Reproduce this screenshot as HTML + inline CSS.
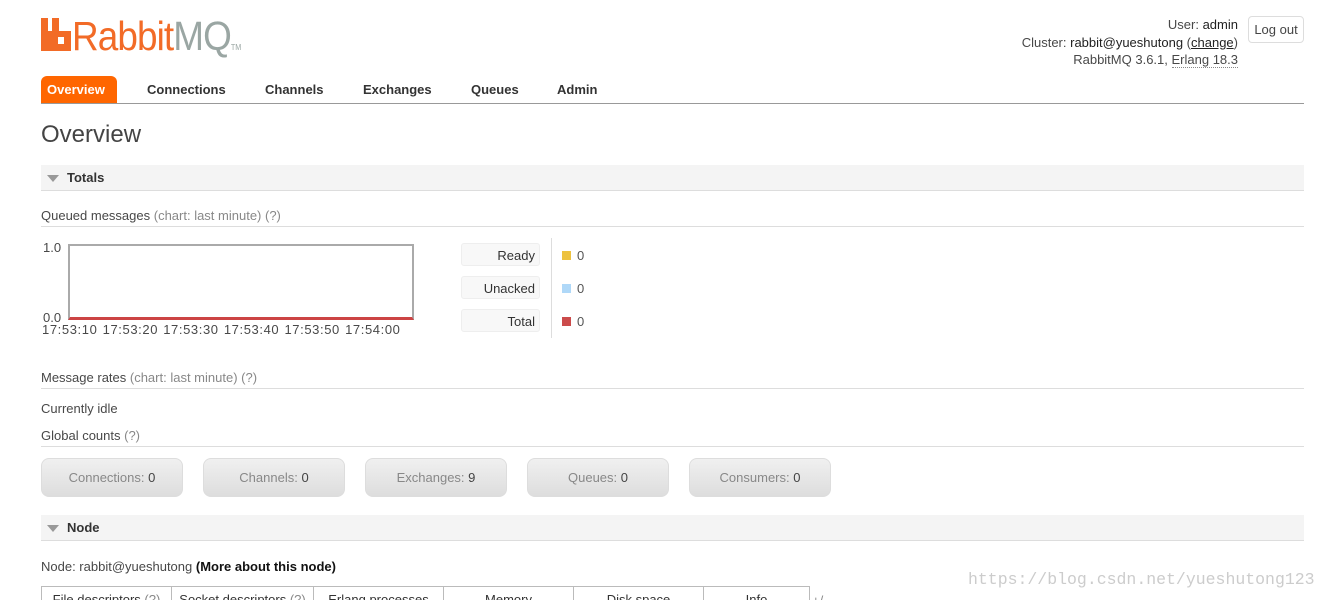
<!DOCTYPE html>
<html><head><meta charset="utf-8"><style>
html,body{margin:0;height:600px;overflow:hidden}
body{background:#fff;font-family:"Liberation Sans",sans-serif;font-size:13px;color:#484848;width:1329px;position:relative}
.a{position:absolute}
.logo{left:72px;top:12px;font-size:41px;color:#f26b27;letter-spacing:-1px;line-height:48px;transform:scaleX(0.9);transform-origin:left top}
.logo span{color:#9aa6a3}
.nav{left:41px;top:76px;width:1263px;height:27px;border-bottom:1px solid #999}
.nav div{position:absolute;top:0;height:27px;line-height:27px;font-weight:bold;color:#333;font-size:13px}
.nav .on{background:#f60;color:#fff;border-radius:6px 6px 0 0;padding:0 6px;left:0;width:64px}
.sec{left:41px;width:1263px;height:25px;background:#f4f4f4;border-bottom:1px solid #ddd;line-height:25px;font-weight:bold;color:#333}
.sec:before{content:"";display:inline-block;margin:0 8px 0 6px;border:6px solid transparent;border-top:7px solid #999;border-bottom:0;vertical-align:middle}
.h{left:41px;width:1263px;border-bottom:1px solid #ddd;padding-bottom:3px}
.g{color:#888}
.btn{top:458px;width:140px;height:37px;background:linear-gradient(#f0f0f0,#ddd);border:1px solid #ddd;border-radius:8px;text-align:center;line-height:38px;color:#888;font-size:13px}
.btn b{font-weight:normal;color:#444}
.lb{left:461px;width:79px;height:23px;background:#f8f8f8;border:1px solid #eee;border-radius:3px;text-align:right;line-height:23px;box-sizing:border-box;padding-right:4px;color:#333}
.sq{left:562px;width:9px;height:9px}
.v{left:577px;color:#555}
th{font-weight:normal;border:1px solid #bbb;padding:5px 6px 10px;color:#333}
</style></head><body>
<svg class="a" style="left:41px;top:18px" width="30" height="33" viewBox="0 0 30 33"><path d="M0 0H7V13H11V0H18V13H30V33H0Z M17 19V26H23V19Z" fill="#f26b27" fill-rule="evenodd"/></svg>
<div class="a logo">Rabbit<span>MQ</span><span style="font-size:8px;letter-spacing:0">TM</span></div>
<div class="a" style="right:91px;top:16px;text-align:right;line-height:17.5px;font-size:13px">User: <span style="color:#222">admin</span><br>Cluster: <span style="color:#222">rabbit@yueshutong</span> (<u style="color:#222">change</u>)<br>RabbitMQ 3.6.1, <span style="border-bottom:1px dotted #888">Erlang 18.3</span></div>
<div class="a" style="left:1248px;top:16px;width:54px;height:25px;border:1px solid #ddd;border-radius:4px;text-align:center;line-height:25px;color:#444">Log out</div>
<div class="a nav"><div class="on">Overview</div><div style="left:106px">Connections</div><div style="left:224px">Channels</div><div style="left:322px">Exchanges</div><div style="left:430px">Queues</div><div style="left:516px">Admin</div></div>
<div class="a" style="left:41px;top:121px;font-size:24px;color:#444">Overview</div>
<div class="a sec" style="top:165px">Totals</div>
<div class="a h" style="top:208px">Queued messages <span class="g">(chart: last minute) (?)</span></div>
<div class="a" style="left:43px;top:240px">1.0</div>
<div class="a" style="left:43px;top:310px">0.0</div>
<div class="a" style="left:68px;top:244px;width:342px;height:71px;border:2px solid #aaa;border-bottom:3px solid #c44;background:#fff"></div>
<div class="a" style="left:42px;top:322px;letter-spacing:0.6px;word-spacing:1px">17:53:10 17:53:20 17:53:30 17:53:40 17:53:50 17:54:00</div>
<div class="a lb" style="top:243px">Ready</div>
<div class="a lb" style="top:276px">Unacked</div>
<div class="a lb" style="top:309px">Total</div>
<div class="a" style="left:551px;top:238px;width:1px;height:100px;background:#ddd"></div>
<div class="a sq" style="top:251px;background:#edc240"></div><div class="a v" style="top:248px">0</div>
<div class="a sq" style="top:284px;background:#afd8f8"></div><div class="a v" style="top:281px">0</div>
<div class="a sq" style="top:317px;background:#cb4b4b"></div><div class="a v" style="top:314px">0</div>
<div class="a h" style="top:370px">Message rates <span class="g">(chart: last minute) (?)</span></div>
<div class="a" style="left:41px;top:401px">Currently idle</div>
<div class="a h" style="top:428px">Global counts <span class="g">(?)</span></div>
<div class="a btn" style="left:41px">Connections: <b>0</b></div>
<div class="a btn" style="left:203px">Channels: <b>0</b></div>
<div class="a btn" style="left:365px">Exchanges: <b>9</b></div>
<div class="a btn" style="left:527px">Queues: <b>0</b></div>
<div class="a btn" style="left:689px">Consumers: <b>0</b></div>
<div class="a sec" style="top:515px">Node</div>
<div class="a" style="left:41px;top:559px">Node: rabbit@yueshutong <b style="color:#111">(More about this node)</b></div>
<table class="a" style="left:41px;top:586px;border-collapse:collapse;font-size:13px"><tr>
<th style="width:117px">File descriptors <span class="g">(?)</span></th><th style="width:129px">Socket descriptors <span class="g">(?)</span></th><th style="width:117px">Erlang processes</th><th style="width:117px">Memory</th><th style="width:117px">Disk space</th><th style="width:93px">Info</th></tr></table>
<div class="a g" style="left:812px;top:593px">+/-</div>
<div class="a" style="left:968px;top:570px;font-family:'Liberation Mono',monospace;font-size:16.5px;color:#ccc">https://blog.csdn.net/yueshutong123</div>
</body></html>
